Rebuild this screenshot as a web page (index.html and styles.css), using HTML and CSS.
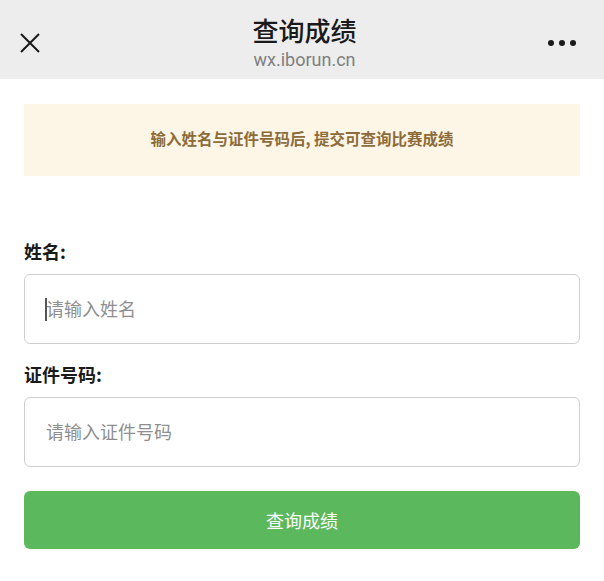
FILE: index.html
```html
<!DOCTYPE html>
<html>
<head>
    <meta charset="UTF-8">
    <title>查询成绩</title>
    <link rel="stylesheet" href="styles.css">
</head>
<body>
    <div class="navbar">
        <svg class="close" width="22" height="22" viewBox="0 0 22 22">
            <path d="M2 2 L20 20 M20 2 L2 20" stroke="#1a1a1a" stroke-width="2" fill="none"/>
        </svg>
        <div class="nav-title">
            <div class="title">查询成绩</div>
            <div class="domain">wx.iborun.cn</div>
        </div>
        <div class="more"><span></span><span></span><span></span></div>
    </div>
    <div class="page">
        <div class="notice">输入姓名与证件号码后, 提交可查询比赛成绩</div>
        <form class="form">
            <label class="label">姓名:</label>
            <div class="field"><span class="caret"></span><input type="text" placeholder="请输入姓名"></div>
            <label class="label">证件号码:</label>
            <div class="field"><input type="text" placeholder="请输入证件号码"></div>
            <button type="button" class="submit">查询成绩</button>
        </form>
    </div>
</body>
</html>
```

FILE: styles.css
```css
body {
    margin: 0;
    background-color: #ffffff;
    font-family: "Noto Sans CJK SC", "Noto Sans", sans-serif;
}
.navbar {
    height: 79px;
    background-color: #ededed;
    display: flex;
    align-items: center;
    justify-content: space-between;
    padding: 0 28px 0 19px;
}
.close {
    margin-top: 6px;
}
.nav-title {
    text-align: center;
    margin-left: 20px;
}
.title {
    font-size: 26px;
    font-weight: 500;
    color: #1a1a1a;
    line-height: 32px;
    margin-top: 6px;
}
.domain {
    font-size: 18px;
    color: #808080;
    line-height: 24px;
    margin-top: 2px;
    font-family: "Roboto", "Noto Sans", sans-serif;
}
.more {
    display: flex;
    gap: 5px;
    margin-top: 6px;
}
.more span {
    width: 6px;
    height: 6px;
    border-radius: 50%;
    background-color: #1a1a1a;
}
.page {
    padding: 25px 24px 0 24px;
}
.notice {
    height: 72px;
    box-sizing: border-box;
    padding-bottom: 4px;
    background-color: #fdf6e6;
    color: #8d6c3a;
    font-size: 15.5px;
    font-weight: bold;
    display: flex;
    align-items: center;
    justify-content: center;
}
.form {
    display: flex;
    flex-direction: column;
    padding-top: 63px;
}
.label {
    font-size: 18px;
    font-weight: bold;
    color: #1a1a1a;
    line-height: 25px;
    margin-bottom: 10px;
}
.field {
    position: relative;
    height: 68px;
    border: 1px solid #cfcfcf;
    border-radius: 6px;
    margin-bottom: 18px;
    display: flex;
    align-items: center;
}
.field input {
    border: none;
    outline: none;
    width: 100%;
    height: 100%;
    background: transparent;
    padding: 0 0 2px 21px;
    font-family: "Noto Sans CJK SC", sans-serif;
    font-size: 18px;
    color: #333;
}
.field input::placeholder {
    color: #8f8f8f;
}
.caret {
    position: absolute;
    left: 20px;
    top: 23px;
    width: 2px;
    height: 23px;
    background-color: #555;
}
.submit {
    margin-top: 6px;
    height: 58px;
    border: none;
    border-radius: 6px;
    background-color: #5cb85c;
    color: #ffffff;
    font-family: "Noto Sans CJK SC", sans-serif;
    font-size: 18px;
}
```
